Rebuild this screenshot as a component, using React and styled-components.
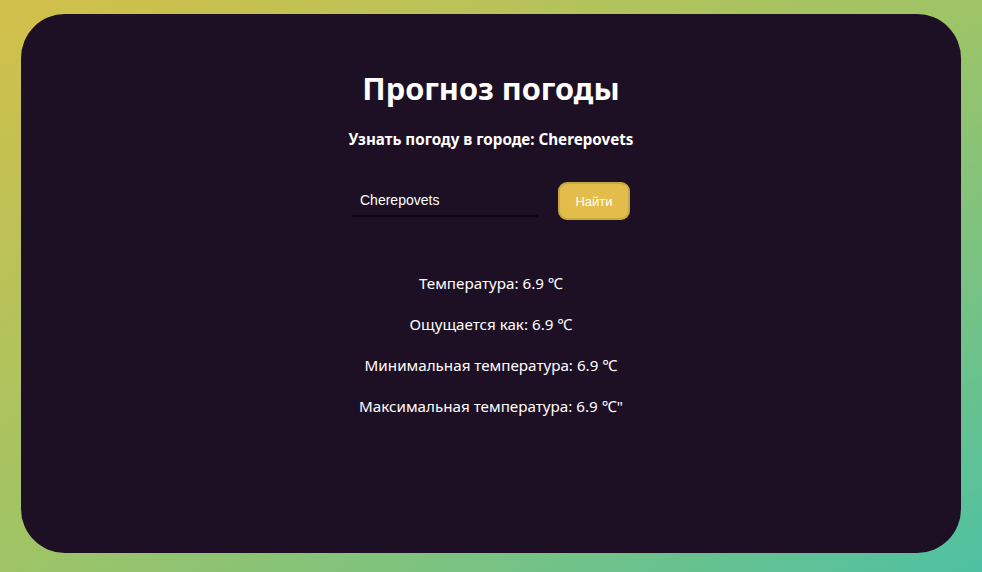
import React from "react";
import styled, { createGlobalStyle } from "styled-components";

const Global = createGlobalStyle`
  html, body { margin: 0; padding: 0; }
  body {
    width: 982px;
    height: 572px;
    overflow: hidden;
    background: linear-gradient(to bottom right, #d3c04a 0%, #9ec466 50%, #4ec1a2 100%);
    font-family: "Noto Sans", "Open Sans", sans-serif;
  }
`;

const Page = styled.div`
  box-sizing: border-box;
  width: 982px;
  height: 572px;
  padding: 14px 21px 19px 21px;
  display: flex;
`;

const Card = styled.main`
  flex: 1;
  background: #1e1024;
  border-radius: 44px;
  display: flex;
  flex-direction: column;
  align-items: center;
  color: #ffffff;
  padding-top: 54px;
`;

const Title = styled.h1`
  margin: 0;
  font-size: 30.7px;
  font-weight: 700;
  line-height: 40px;
`;

const Subtitle = styled.h3`
  margin: 21px 0 0 0;
  font-size: 15.2px;
  font-weight: 700;
  line-height: 20px;
`;

const Form = styled.form`
  margin-top: 33px;
  display: flex;
  align-items: center;
  gap: 20px;
`;

const Input = styled.input`
  box-sizing: border-box;
  width: 186px;
  height: 32px;
  background: transparent;
  border: none;
  border-bottom: 2px solid #0e0712;
  color: #ffffff;
  font-family: "Liberation Sans", Arial, sans-serif;
  font-size: 14px;
  padding: 0 8px 0 8px;
  outline: none;
  margin-bottom: 1px;
`;

const Button = styled.button`
  box-sizing: border-box;
  width: 72px;
  height: 38px;
  background: #e2bd4b;
  border: 2px solid #c9a641;
  border-radius: 9px;
  color: #ffffff;
  font-family: "Liberation Sans", Arial, sans-serif;
  font-size: 13px;
  cursor: pointer;
`;

const Results = styled.section`
  margin-top: 52px;
  display: flex;
  flex-direction: column;
  align-items: center;
  gap: 19px;
`;

const Line = styled.p`
  margin: 0;
  font-size: 15.2px;
  line-height: 22px;
  color: #ffffff;
`;

export default function App() {
  const t = "6.9";
  return (
    <>
      <Global />
      <Page>
        <Card>
          <Title>Прогноз погоды</Title>
          <Subtitle>Узнать погоду в городе: Cherepovets</Subtitle>
          <Form onSubmit={(e) => e.preventDefault()}>
            <Input defaultValue="Cherepovets" />
            <Button type="submit">Найти</Button>
          </Form>
          <Results>
            <Line>Температура: {t} ℃</Line>
            <Line>Ощущается как: {t} ℃</Line>
            <Line>Минимальная температура: {t} ℃</Line>
            <Line>Максимальная температура: {t} ℃"</Line>
          </Results>
        </Card>
      </Page>
    </>
  );
}
